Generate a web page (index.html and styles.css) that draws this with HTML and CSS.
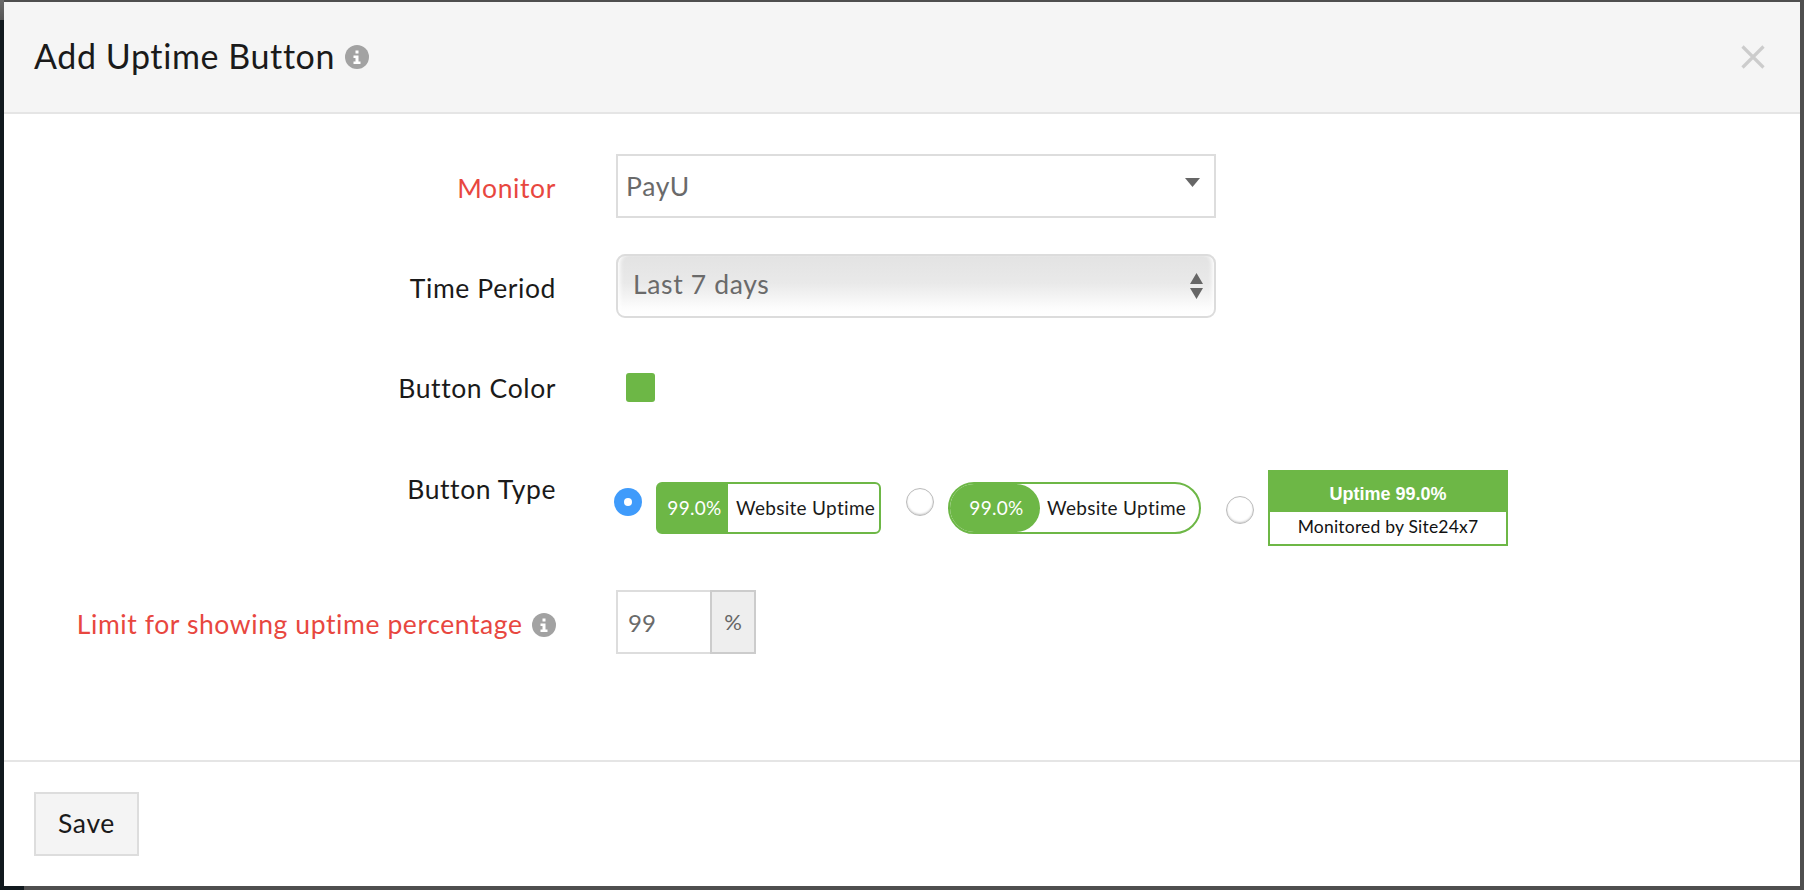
FILE: index.html
```html
<!DOCTYPE html>
<html lang="en">
<head>
<meta charset="utf-8">
<title>Add Uptime Button</title>
<link rel="stylesheet" href="styles.css">
</head>
<body>
<main class="dialog">
  <header class="dialog-head">
    <h1 class="title">Add Uptime Button</h1>
    <svg class="info info-title" viewBox="0 0 24 24"><circle cx="12" cy="12" r="12"/><path class="info-i" d="M10.5 5.5h3v3h-3zM8.5 10.5h5v6h2v2.5h-7v-2.5h2v-3.5h-2z"/></svg>
    <svg class="close" viewBox="0 0 24 24"><path d="M1.5 1.5l21 21M22.5 1.5l-21 21"/></svg>
  </header>
  <form class="dialog-body">
    <div class="row row-monitor">
      <label class="label required">Monitor</label>
      <div class="combo">
        <span>PayU</span>
        <svg class="combo-arrow" viewBox="0 0 15 9"><path d="M0 0h15l-7.5 9z"/></svg>
      </div>
    </div>
    <div class="row row-period">
      <label class="label">Time Period</label>
      <div class="native-select">
        <span>Last 7 days</span>
        <svg class="updown" viewBox="0 0 15 26"><path d="M7.5 0L14 11H1zM1 15h13L7.5 26z"/></svg>
      </div>
    </div>
    <div class="row row-color">
      <label class="label">Button Color</label>
      <span class="swatch"></span>
    </div>
    <div class="row row-type">
      <label class="label label-type">Button Type</label>
      <div class="types">
        <span class="radio radio-on"></span>
        <div class="badge badge-rect"><span class="pct">99.0%</span><span class="site">Website Uptime</span></div>
        <span class="radio radio-second"></span>
        <div class="badge badge-pill"><span class="pct">99.0%</span><span class="site">Website Uptime</span></div>
        <span class="radio radio-third"></span>
        <div class="badge-box">
          <div class="box-top">Uptime 99.0%</div>
          <div class="box-bottom">Monitored by Site24x7</div>
        </div>
      </div>
    </div>
    <div class="row row-limit">
      <label class="label required">Limit for showing uptime percentage
        <svg class="info info-label" viewBox="0 0 24 24"><circle cx="12" cy="12" r="12"/><path class="info-i" d="M10.5 5.5h3v3h-3zM8.5 10.5h5v6h2v2.5h-7v-2.5h2v-3.5h-2z"/></svg>
      </label>
      <div class="limit">
        <span class="limit-value">99</span>
        <span class="limit-unit">%</span>
      </div>
    </div>
  </form>
  <footer class="dialog-foot">
    <button class="save" type="button">Save</button>
  </footer>
</main>
</body>
</html>
```
FILE: styles.css
```css
* { box-sizing: border-box; }
html, body { margin: 0; height: 890px; overflow: hidden; }
body {
  padding: 2px 4px 4px;
  background:
    linear-gradient(#6a6a6a, #555) 0 0 / 4px 20px no-repeat,
    linear-gradient(#11191e, #11191e) 0 0 / 4px 100% no-repeat,
    linear-gradient(#11191e, #11191e) 0 100% / 24px 4px no-repeat,
    #4f4f4f;
  font-family: Lato, "Liberation Sans", sans-serif;
  color: #1a1a1a;
}
.dialog {
  height: 884px;
  background: #fff;
  display: flex;
  flex-direction: column;
}
.dialog-head {
  height: 112px;
  flex: none;
  background: #f5f5f5;
  border-bottom: 2px solid #e5e5e5;
  display: flex;
  align-items: center;
  padding: 0 35px 0 30px;
}
.title {
  margin: 0;
  padding-bottom: 4px;
  font-size: 34px;
  font-weight: 400;
  letter-spacing: 0.6px;
  color: #1a1a1a;
}
.info { fill: #a2a2a2; flex: none; }
.info-i { fill: #fff; }
.info-title { width: 24px; height: 24px; margin-left: 10px; }
.close {
  width: 24px;
  height: 24px;
  margin-left: auto;
  fill: none;
  stroke: #cccccc;
  stroke-width: 3.2;
}
.dialog-body { flex: 1; padding-top: 40px; }
.row { display: flex; align-items: center; }
.row-period, .row-color { margin-top: 36px; }
.row-color { height: 64px; }
.row-type { margin-top: 36px; align-items: flex-start; }
.row-limit { margin-top: 44px; }
.label {
  width: 552px;
  flex: none;
  text-align: right;
  font-size: 26.5px;
  letter-spacing: 0.6px;
  margin-right: 60px;
  padding-top: 4px;
}
.label-type { padding-top: 19px; }
.required { color: #e8473f; }
.info-label { width: 24px; height: 24px; margin-left: 2px; vertical-align: -3px; }
.combo {
  width: 600px;
  height: 64px;
  border: 2px solid #dddddd;
  display: flex;
  align-items: center;
  justify-content: space-between;
  padding: 0 14px 0 8px;
  font-size: 26.5px;
  letter-spacing: 0.65px;
  color: #6a6a6a;
}
.combo-arrow { width: 15px; height: 9px; fill: #666; margin-top: -8px; }
.native-select {
  width: 600px;
  height: 64px;
  border: 2px solid #dcdcdc;
  border-radius: 9px;
  background: linear-gradient(#e3e3e3 0%, #e9e9e9 45%, #fdfdfd 88%, #fff 100%);
  box-shadow: inset 5px 0 4px -3px #fff, inset -5px 0 4px -3px #fff;
  display: flex;
  align-items: center;
  justify-content: space-between;
  padding: 0 10px 4px 15px;
  font-size: 26.5px;
  letter-spacing: 0.65px;
  color: #6a6a6a;
}
.updown { width: 15px; height: 26px; fill: #666; margin-top: 4px; }
.swatch {
  width: 29px;
  height: 29px;
  margin: 2px 0 0 10px;
  background: #6db746;
  border-radius: 3px;
}
.types { display: flex; align-items: flex-start; margin-left: -2px; }
.radio {
  width: 28px;
  height: 28px;
  flex: none;
  border-radius: 50%;
  background: #fff;
  border: 1px solid #bbb;
  box-shadow: inset 0 -1px 2px #ccc;
  margin-top: 34px;
}
.radio-on {
  background: #3f9bfb;
  border: 0;
  box-shadow: none;
  display: flex;
  align-items: center;
  justify-content: center;
}
.radio-on::after {
  content: "";
  width: 8px;
  height: 8px;
  background: #fff;
  border-radius: 50%;
}
.radio-second { margin-left: 25px; }
.radio-third { margin-left: 25px; margin-top: 42px; }
.badge {
  height: 52px;
  margin-top: 28px;
  margin-left: 14px;
  border: 2px solid #6db746;
  display: flex;
  align-items: center;
  font-size: 19px;
  letter-spacing: 0.3px;
}
.pct {
  height: 100%;
  padding: 0 0 2px 3px;
  background: #6db746;
  color: #fff;
  display: flex;
  align-items: center;
  justify-content: center;
}
.site { padding-bottom: 2px; }
.badge-rect { width: 225px; border-radius: 6px; }
.badge-rect .pct { width: 70px; }
.badge-rect .site { margin-left: 8px; }
.badge-pill { width: 253px; border-radius: 26px; }
.badge-pill .pct { width: 90px; border-radius: 24px; }
.badge-pill .site { margin-left: 7px; }
.badge-box {
  width: 240px;
  height: 76px;
  margin-left: 14px;
  margin-top: 16px;
  border: 2px solid #6db746;
  text-align: center;
}
.box-top {
  height: 40px;
  padding-top: 4px;
  background: #6db746;
  color: #fff;
  font-family: "Liberation Sans", Arial, sans-serif;
  font-weight: 700;
  font-size: 18px;
  line-height: 36px;
}
.box-bottom { font-size: 17.5px; line-height: 30px; letter-spacing: 0.2px; color: #111; }
.limit { display: flex; width: 140px; height: 64px; }
.limit-value {
  width: 94px;
  border: 2px solid #dddddd;
  border-right: 0;
  padding-left: 10px;
  display: flex;
  align-items: center;
  font-size: 24px;
  color: #6a6a6a;
}
.limit-unit {
  width: 46px;
  background: #eeeeee;
  border: 2px solid #cccccc;
  display: flex;
  align-items: center;
  justify-content: center;
  padding-bottom: 2px;
  font-size: 22px;
  color: #666;
}
.dialog-foot {
  height: 126px;
  flex: none;
  border-top: 2px solid #e5e5e5;
  padding: 30px 0 0 30px;
}
.save {
  width: 105px;
  height: 64px;
  background: #f4f4f4;
  border: 2px solid #dddddd;
  font-family: inherit;
  font-size: 26.5px;
  letter-spacing: 0.65px;
  color: #1a1a1a;
  padding: 0 0 2px;
}
```
